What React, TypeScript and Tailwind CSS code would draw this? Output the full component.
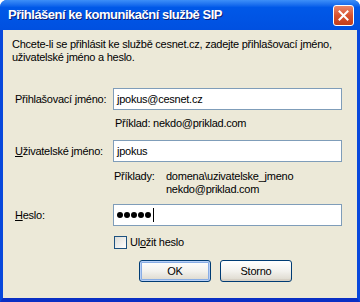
import React from 'react';

const ui = { fontFamily: '"Liberation Sans", Arial, sans-serif' };

function XpButton({ label, isDefault }: { label: string; isDefault?: boolean }) {
  return (
    <button
      className={
        'h-[22px] w-[72px] rounded-[3px] border border-[#003c74] bg-linear-to-b from-white via-[#f3f2ee] to-[#dcd8cc] text-[11px] tracking-[-0.25px] text-black ' +
        (isDefault ? 'shadow-[inset_0_0_0_1px_#b8d0f7,inset_0_0_0_2px_#89ade4]' : 'shadow-[inset_0_-2px_0_#d6d0c5]')
      }
      style={ui}
    >
      {label}
    </button>
  );
}

function TextBox({ children }: { children?: React.ReactNode }) {
  return (
    <div className="flex h-[22px] w-[229px] items-center border border-[#7f9db9] bg-white pl-[3px] text-[11px] text-black">
      {children}
    </div>
  );
}

export default function App() {
  return (
    <div className="flex h-[302px] w-[360px] flex-col overflow-hidden rounded-t-[7px] bg-[#0054e3]" style={ui}>
      {/* title bar */}
      <div className="flex h-[30px] shrink-0 items-center justify-between bg-linear-to-b from-[#3d8ff8] via-[#0058e8] via-25% to-[#0050e0] pl-[8px] pr-[6px]">
        <span className="text-[13px] font-bold tracking-[-0.5px] text-white [text-shadow:1px_1px_0_#0a1d73]">
          Přihlášení ke komunikační službě SIP
        </span>
        <div className="flex h-[21px] w-[21px] items-center justify-center rounded-[3px] border border-white bg-linear-to-b from-[#e9866a] via-[#d9522e] to-[#c13e1a]">
          <svg width="11" height="11" viewBox="0 0 11 11">
            <path d="M1.5 1.5 L9.5 9.5 M9.5 1.5 L1.5 9.5" stroke="white" strokeWidth="2" strokeLinecap="square" />
          </svg>
        </div>
      </div>

      {/* client area */}
      <div className="flex flex-1 flex-col border-x-[3px] border-b-[4px] border-x-[#0848dc] border-b-[#0a2fc4] bg-[#ece9d8] pt-[8px] text-[11px] leading-[13px] tracking-[-0.25px] text-black">
        <p className="whitespace-nowrap pl-[9px]">
          Chcete-li se přihlásit ke službě cesnet.cz, zadejte přihlašovací jméno,
          <br />
          uživatelské jméno a heslo.
        </p>

        <div className="mt-[24px] flex items-center">
          <span className="w-[110px] pl-[12px]">
            Přihlašovací <u>j</u>méno:
          </span>
          <TextBox>jpokus@cesnet.cz</TextBox>
        </div>
        <div className="mt-[7px] pl-[112px]">Příklad: nekdo@priklad.com</div>

        <div className="mt-[10px] flex items-center">
          <span className="w-[110px] pl-[12px]">
            <u>U</u>živatelské jméno:
          </span>
          <TextBox>jpokus</TextBox>
        </div>
        <div className="mt-[8px] flex pl-[111px]">
          <span className="w-[52px]">Příklady:</span>
          <div className="flex flex-col">
            <span>domena\uzivatelske_jmeno</span>
            <span>nekdo@priklad.com</span>
          </div>
        </div>

        <div className="mt-[8px] flex items-center">
          <span className="w-[110px] pl-[12px]">
            <u>H</u>eslo:
          </span>
          <TextBox>
            <div className="flex items-center gap-[1px]">
              {[0, 1, 2, 3, 4].map((i) => (
                <span key={i} className="h-[6px] w-[6px] rounded-full bg-black" />
              ))}
              <span className="ml-[1px] h-[14px] w-[1px] bg-black" />
            </div>
          </TextBox>
        </div>

        <label className="mt-[10px] flex items-center gap-[3px] pl-[111px]">
          <span className="h-[13px] w-[13px] border border-[#1c5180] bg-linear-to-br from-[#dcdcd7] to-white" />
          <span>
            Ul<u>o</u>žit heslo
          </span>
        </label>

        <div className="mt-[11px] flex gap-[9px] pl-[136px]">
          <XpButton label="OK" isDefault />
          <XpButton label="Storno" />
        </div>
      </div>
    </div>
  );
}
